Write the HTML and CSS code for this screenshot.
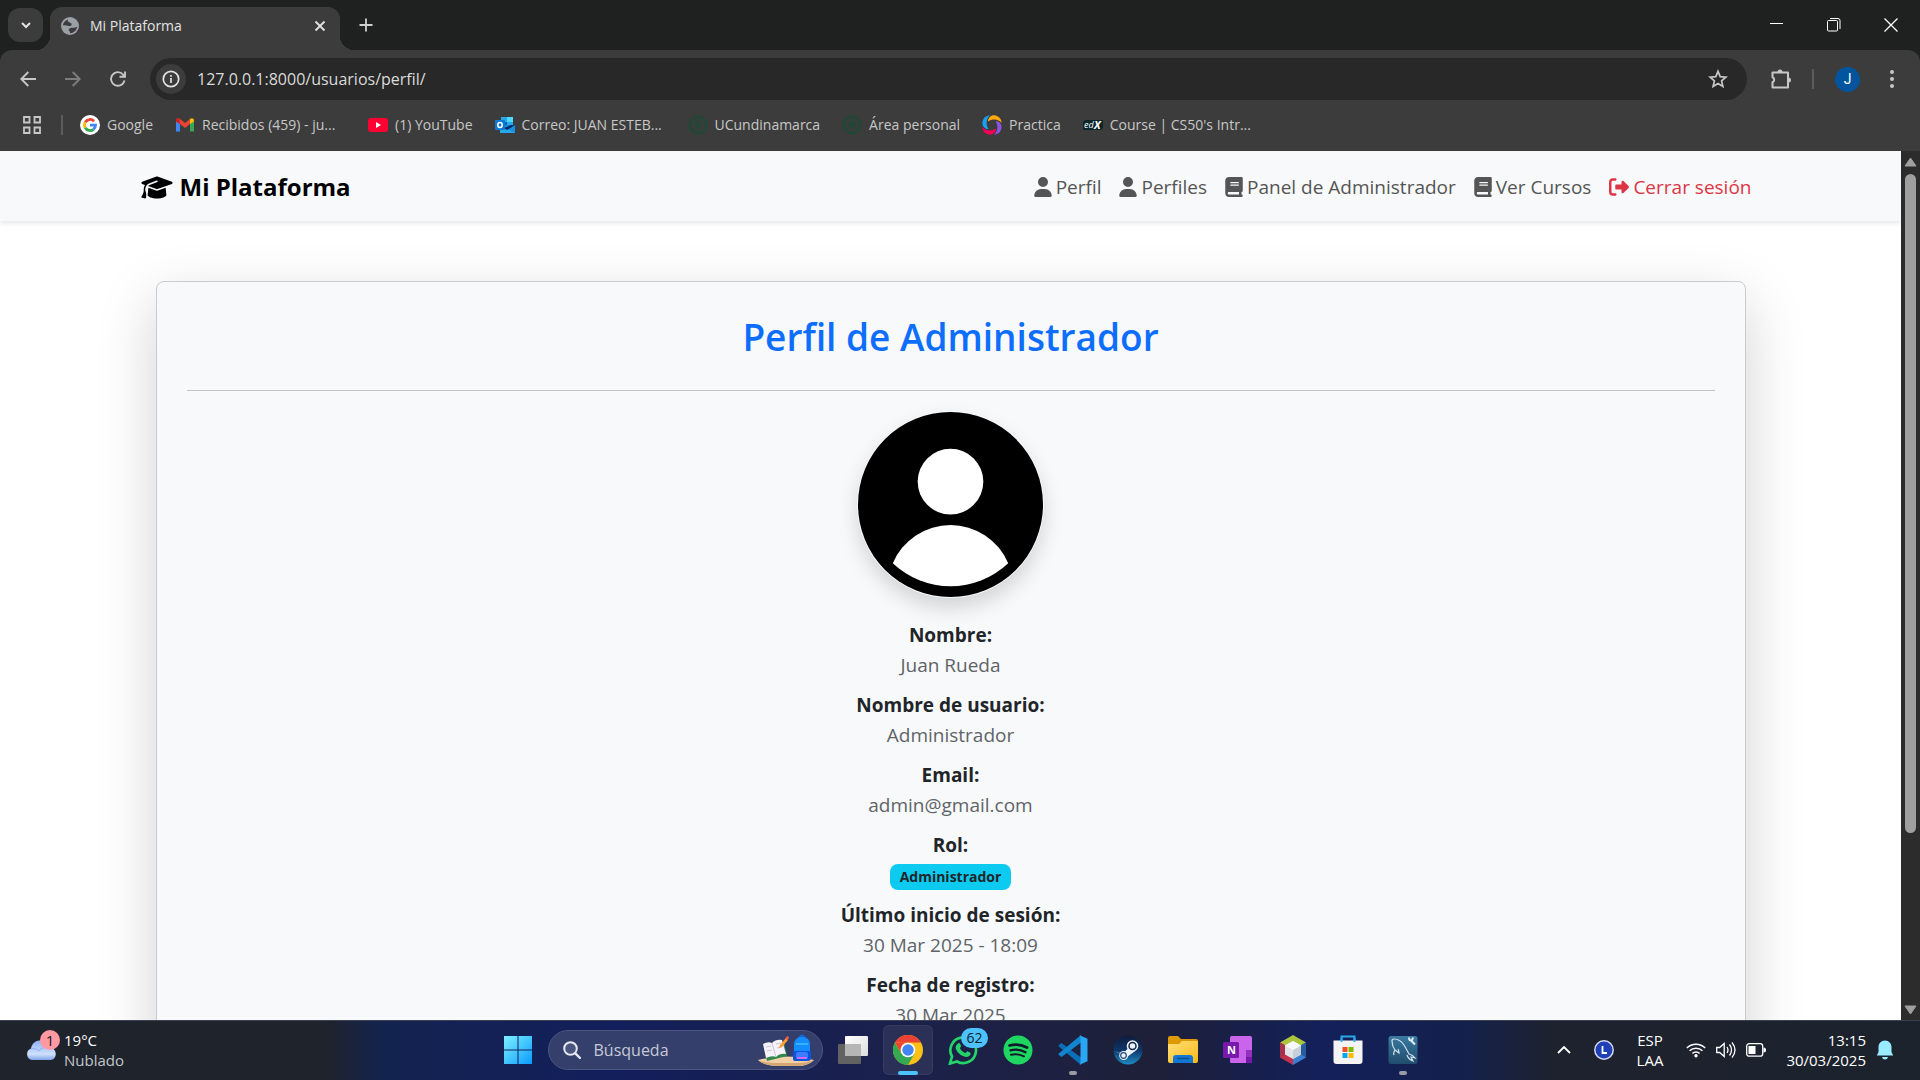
FILE: index.html
```html
<!DOCTYPE html>
<html lang="es">
<head>
<meta charset="utf-8">
<meta name="viewport" content="width=device-width, initial-scale=1">
<title>Mi Plataforma</title>
<link rel="stylesheet" href="styles.css">
</head>
<body>
<svg class="defs" width="0" height="0" aria-hidden="true">
  <symbol id="fa-user" viewBox="0 0 448 512"><path d="M224 256A128 128 0 1 0 224 0a128 128 0 1 0 0 256zm-45.7 48C79.8 304 0 383.8 0 482.3C0 498.7 13.3 512 29.7 512H418.3c16.4 0 29.7-13.3 29.7-29.7C448 383.8 368.2 304 269.7 304H178.3z"/></symbol>
  <symbol id="fa-book" viewBox="0 0 448 512"><path d="M96 0C43 0 0 43 0 96V416c0 53 43 96 96 96H384h32c17.7 0 32-14.3 32-32s-14.3-32-32-32V384c17.7 0 32-14.3 32-32V32c0-17.7-14.3-32-32-32H384 96zm0 384H352v64H96c-17.7 0-32-14.3-32-32s14.3-32 32-32zm32-240c0-8.8 7.2-16 16-16H336c8.8 0 16 7.2 16 16s-7.2 16-16 16H144c-8.8 0-16-7.2-16-16zm16 48H336c8.8 0 16 7.2 16 16s-7.2 16-16 16H144c-8.8 0-16-7.2-16-16s7.2-16 16-16z"/></symbol>
  <symbol id="seal" viewBox="0 0 20 20"><circle cx="10" cy="10" r="8.6" fill="none" stroke="#1c4a38" stroke-width="2.2" stroke-dasharray="1.9 .8"/><circle cx="10" cy="10" r="7" fill="none" stroke="#1c4a38" stroke-width="1"/><path d="M8 6.5v7M6.5 9c2-3.500 7-2.500 6.500 1.500-.3 2-2.500 3.500-4.500 2.500M8 8l3 2-2 2" fill="none" stroke="#1c4a38" stroke-width="1.200"/></symbol>
  <symbol id="blade" viewBox="0 0 20 20"><path d="M6 6.500C6 2 10.500-1 15 1c3 1.300 4.500 4 4.700 7C17 4.500 11 3.200 6 6.500z"/></symbol>
</svg>

<header class="browser">
  <div class="tabstrip">
    <button class="tab-search" aria-label="Buscar pestañas"><svg width="12" height="12" viewBox="0 0 12 12"><path d="M2 4l4 4 4-4" fill="none" stroke="#e3e3e3" stroke-width="2"/></svg></button>
    <div class="tab">
      <svg width="18" height="18" viewBox="0 0 18 18"><circle cx="9" cy="9" r="9" fill="#9aa0a6"/><path d="M1.800 8.500c.5-2.500 2-4.700 4.700-6 .5 1.500.5 2.500 2 3 2 .5 2.500 1 2 2.500-.5 1.200-1.500 1-3 1-2 0-3.500-1-5.700-.5zM9 16.200c0-1.700-.3-2.500-1.500-3 .5-2 2-2.700 4-2.500 1.500.2 2.500-.5 4.700-.7-.6 3.300-3.500 6.200-7.200 6.200z" fill="#3c3c3c"/></svg>
      <span class="tab-title">Mi Plataforma</span>
      <button class="bare" aria-label="Cerrar pestaña"><svg width="12" height="12" viewBox="0 0 12 12"><path d="M1.500 1.500l9 9M10.500 1.500l-9 9" stroke="#e3e3e3" stroke-width="1.800"/></svg></button>
    </div>
    <button class="bare new-tab" aria-label="Nueva pestaña"><svg width="14" height="14" viewBox="0 0 14 14"><path d="M7 .5v13M.5 7h13" stroke="#d0d0d0" stroke-width="1.800"/></svg></button>
    <div class="window-controls">
      <button class="bare" aria-label="Minimizar"><svg width="14" height="14" viewBox="0 0 14 14"><path d="M0 5.500h13" stroke="#fff"/></svg></button>
      <button class="bare" aria-label="Restaurar"><svg width="14" height="14" viewBox="0 0 14 14" fill="none" stroke="#fff"><rect x=".5" y="2.500" width="10" height="10.500" rx="1"/><path d="M3 .5h8a2 2 0 0 1 2 2v8.500"/></svg></button>
      <button class="bare" aria-label="Cerrar"><svg width="14" height="14" viewBox="0 0 14 14"><path d="M.5.5l13 13M13.500.5l-13 13" stroke="#fff" stroke-width="1.300"/></svg></button>
    </div>
  </div>

  <div class="toolbar">
    <button class="bare nav-btn" aria-label="Atrás"><svg width="16" height="16" viewBox="0 0 16 16" fill="none" stroke="#c7c7c7" stroke-width="1.900"><path d="M16 8H1.500M8.300 1L1.300 8l7 7"/></svg></button>
    <button class="bare nav-btn" aria-label="Adelante"><svg width="16" height="16" viewBox="0 0 16 16" fill="none" stroke="#7d7d7d" stroke-width="1.900"><path d="M0 8h14.500M7.700 1l7 7-7 7"/></svg></button>
    <button class="bare nav-btn" aria-label="Recargar"><svg width="16" height="16" viewBox="0 0 16 16" fill="none" stroke="#c7c7c7" stroke-width="1.900"><path d="M14.500 9.500A6.800 6.800 0 1 1 13 3.500l1.500 1.800M15 .5v5.300H9.500"/></svg></button>
    <div class="omnibox">
      <button class="site-info" aria-label="Información del sitio"><svg width="18" height="18" viewBox="0 0 18 18"><circle cx="9" cy="9" r="7.700" fill="none" stroke="#e3e3e3" stroke-width="1.700"/><path d="M9 8v5M9 5v1.700" stroke="#e3e3e3" stroke-width="1.700"/></svg></button>
      <input class="url" type="text" aria-label="Dirección" value="127.0.0.1:8000/usuarios/perfil/">
      <button class="bare" aria-label="Añadir a marcadores"><svg width="20" height="20" viewBox="0 0 20 20"><path d="M10 2.300l2.200 5.300 5.700.5-4.300 3.800 1.300 5.600L10 14.500l-4.900 3 1.300-5.600-4.300-3.800 5.700-.5z" fill="none" stroke="#c7c7c7" stroke-width="1.700"/></svg></button>
    </div>
    <button class="bare ext" aria-label="Extensiones"><svg width="22" height="22" viewBox="0 0 22 22"><path d="M2.500 4.500H18v15H2.500v-5.200a2.700 2.700 0 0 0 0-5z" fill="none" stroke="#c7c7c7" stroke-width="2" stroke-linejoin="round"/><path d="M7.500 4a2.500 2.500 0 0 1 5 0zM18.500 9.500a2.500 2.500 0 0 1 0 5z" fill="#c7c7c7"/></svg></button>
    <span class="divider"></span>
    <button class="avatar" aria-label="Perfil de Chrome">J</button>
    <button class="bare menu" aria-label="Menú"><svg width="6" height="20" viewBox="0 0 6 20" fill="#c7c7c7"><circle cx="3" cy="3" r="2"/><circle cx="3" cy="10" r="2"/><circle cx="3" cy="17" r="2"/></svg></button>
  </div>

  <nav class="bookmarks" aria-label="Marcadores">
    <button class="bare apps" aria-label="Aplicaciones"><svg width="18" height="18" viewBox="0 0 18 18" fill="none" stroke="#c7c7c7" stroke-width="1.800"><path d="M1 1h5.500v5.500H1zM11.500 1H17v5.500h-5.500zM1 11.500h5.500V17H1zM11.500 11.500H17V17h-5.500z"/></svg></button>
    <span class="divider"></span>
    <a href="#"><svg width="20" height="20" viewBox="0 0 20 20" fill="none" stroke-width="2.800"><circle cx="10" cy="10" r="10" fill="#fff"/><path d="M14 6.200A5.500 5.500 0 0 0 5.200 7.300" stroke="#ea4335"/><path d="M5.200 7.300a5.500 5.500 0 0 0 0 5.400" stroke="#fbbc05"/><path d="M5.200 12.700a5.500 5.500 0 0 0 8.300 1.600" stroke="#34a853"/><path d="M13.500 14.300A5.500 5.500 0 0 0 15.500 10.200H10" stroke="#4285f4"/></svg><span>Google</span></a>
    <a class="wide" href="#"><svg width="20" height="20" viewBox="0 0 20 20"><path d="M1 5v11.500h4V8.500z" fill="#4285f4"/><path d="M15 8.500v8h4V5z" fill="#34a853"/><path d="M1 5.500c0-2.500 2.500-3 4-1.500l5 4 5-4v5l-5 4-5-4L1 6.500z" fill="#ea4335"/><path d="M1 5.500c0-2 2-2.700 3.500-1.800L5 9 1 6.500z" fill="#c5221f"/><path d="M15 4c1.500-1.500 4-1 4 1.500v1L15 9z" fill="#fbbc04"/></svg><span>Recibidos (459) - ju...</span></a>
    <a href="#"><svg width="20" height="20" viewBox="0 0 20 20"><rect y="3" width="20" height="14" rx="3" fill="#ff0033"/><path d="M8 7v6l5-3z" fill="#fff"/></svg><span>(1) YouTube</span></a>
    <a class="wide" href="#"><svg width="20" height="20" viewBox="0 0 20 20"><path d="M6 2h12v9H6z" fill="#28a8ea"/><path d="M12 2h6v5h-6z" fill="#50d9ff"/><path d="M6 7h6v5H6z" fill="#0364b8"/><path d="M5 10h15v8H5z" fill="#1490df"/><path d="M5 18h15l-15-8z" fill="#28a8ea"/><path d="M20 10l-8 5-3-2 7-3z" fill="#0a2767"/><rect y="5" width="10" height="10" rx="1" fill="#0f78d4"/><ellipse cx="5" cy="10" rx="2.200" ry="2.500" fill="none" stroke="#fff" stroke-width="1.500"/></svg><span>Correo: JUAN ESTEB...</span></a>
    <a href="#"><svg width="20" height="20"><use href="#seal"/></svg><span>UCundinamarca</span></a>
    <a href="#"><svg width="20" height="20"><use href="#seal"/></svg><span>Área personal</span></a>
    <a href="#"><svg width="20" height="20" viewBox="0 0 20 20"><use href="#blade" width="20" height="20" fill="#ffa80f"/><use href="#blade" width="20" height="20" fill="#8a55e0" transform="rotate(90 10 10)"/><use href="#blade" width="20" height="20" fill="#f50057" transform="rotate(180 10 10)"/><use href="#blade" width="20" height="20" fill="#19a0f0" transform="rotate(270 10 10)"/></svg><span>Practica</span></a>
    <a href="#"><svg width="20" height="20" viewBox="0 0 20 20"><path d="M2 5h18v8l-2 2H0V7z" fill="#0b262b"/><text x="1" y="13" class="edx">ed</text><text x="11" y="14" class="edx edx-x">X</text></svg><span>Course | CS50's Intr...</span></a>
  </nav>
</header>

<div class="viewport">
  <div class="page">
    <nav class="navbar">
      <div class="container navbar-inner">
        <a class="brand" href="#"><svg width="32" height="25" viewBox="0 0 640 512"><path d="M320 32c-8.100 0-16.100 1.400-23.700 4.100L15.800 137.400C6.300 140.900 0 149.900 0 160s6.300 19.100 15.800 22.600l57.900 20.900C57.300 229.300 48 259.800 48 291.900v28.100c0 28.400-10.800 57.700-22.300 80.800c-6.500 13-13.900 25.800-22.500 37.600C0 442.700-.9 448.300 .9 453.400s6 8.900 11.200 10.200l64 16c4.200 1.100 8.700 .3 12.400-2s6.300-6.100 7.100-10.400c8.600-42.800 4.300-81.200-2.100-108.700C90.300 344.300 86 329.800 80 316.500V291.900c0-30.200 10.200-58.700 27.900-81.500c12.900-15.500 29.600-28 49.200-35.700l157-61.700c8.200-3.200 17.500 .8 20.700 9s-.8 17.500-9 20.700l-157 61.700c-12.400 4.900-23.300 12.400-32.200 21.600l159.600 57.600c7.600 2.700 15.600 4.100 23.700 4.100s16.100-1.400 23.700-4.100L624.200 182.600c9.500-3.400 15.800-12.500 15.800-22.600s-6.300-19.100-15.800-22.600L343.700 36.100C336.100 33.400 328.100 32 320 32zM128 408c0 35.300 86 72 192 72s192-36.700 192-72L496.700 262.600 354.500 314c-11.100 4-22.800 6-34.500 6s-23.500-2-34.500-6L143.300 262.600 128 408z"/></svg><span>Mi Plataforma</span></a>
        <ul class="nav-links">
          <li><a href="#"><svg width="18" height="20"><use href="#fa-user"/></svg>Perfil</a></li>
          <li><a href="#"><svg width="18" height="20"><use href="#fa-user"/></svg>Perfiles</a></li>
          <li><a href="#"><svg width="18" height="20"><use href="#fa-book"/></svg>Panel de Administrador</a></li>
          <li><a href="#"><svg width="18" height="20"><use href="#fa-book"/></svg>Ver Cursos</a></li>
          <li><a class="danger" href="#"><svg width="20" height="20" viewBox="0 0 512 512"><path d="M377.900 105.900L500.700 228.700c7.200 7.200 11.300 17.100 11.300 27.300s-4.100 20.100-11.300 27.300L377.900 406.100c-6.400 6.400-15 9.900-24 9.900c-18.700 0-33.900-15.200-33.900-33.900l0-62.100-128 0c-17.700 0-32-14.300-32-32l0-64c0-17.700 14.300-32 32-32l128 0 0-62.100c0-18.700 15.200-33.900 33.900-33.900c9 0 17.600 3.600 24 9.900zM160 96L96 96c-17.700 0-32 14.300-32 32l0 256c0 17.700 14.300 32 32 32l64 0c17.700 0 32 14.300 32 32s-14.300 32-32 32l-64 0c-53 0-96-43-96-96L0 128C0 75 43 32 96 32l64 0c17.700 0 32 14.300 32 32s-14.300 32-32 32z"/></svg>Cerrar sesión</a></li>
        </ul>
      </div>
    </nav>
    <main class="container content">
      <section class="card">
        <h2>Perfil de Administrador</h2>
        <hr>
        <svg class="photo" width="187" height="187" viewBox="0 0 188 188" role="img" aria-label="Foto de perfil"><circle cx="94" cy="94" r="93" /><circle cx="94" cy="71" r="33" fill="#fff"/><path d="M36 153a63 63 0 0 1 116 0a84 84 0 0 1-116 0z" fill="#fff"/></svg>
        <dl class="details">
          <div><dt>Nombre:</dt><dd>Juan Rueda</dd></div>
          <div><dt>Nombre de usuario:</dt><dd>Administrador</dd></div>
          <div><dt>Email:</dt><dd>admin@gmail.com</dd></div>
          <div><dt>Rol:</dt><dd><span class="badge">Administrador</span></dd></div>
          <div><dt>Último inicio de sesión:</dt><dd>30 Mar 2025 - 18:09</dd></div>
          <div><dt>Fecha de registro:</dt><dd>30 Mar 2025</dd></div>
        </dl>
      </section>
    </main>
  </div>
  <div class="scrollbar" aria-hidden="true">
    <svg width="13" height="10" viewBox="0 0 13 10"><path d="M6.500 1L12 9H1z" fill="#9f9f9f" stroke="#9f9f9f" stroke-linejoin="round"/></svg>
    <div class="track"><div class="thumb"></div></div>
    <svg width="13" height="10" viewBox="0 0 13 10"><path d="M6.500 9L12 1H1z" fill="#9f9f9f" stroke="#9f9f9f" stroke-linejoin="round"/></svg>
  </div>
</div>

<footer class="taskbar">
  <button class="weather">
    <span class="weather-icon">
      <svg width="30" height="20" viewBox="0 0 30 20"><defs><linearGradient id="cl" x2="0" y2="1"><stop stop-color="#8fb2f5"/><stop offset=".7" stop-color="#cfe0fb"/><stop offset="1" stop-color="#7fa3ea"/></linearGradient></defs><path d="M6 20a6 6 0 0 1-1-11.500C6 3 10 .5 14 .5c5 0 8 3.500 9.500 7C32 8 31.500 20 24 20z" fill="url(#cl)"/><path d="M5 9c4-1 6 0 8 2 2-3 6-4 10-3" fill="none" stroke="#8eaeee"/></svg>
      <span class="count">1</span>
    </span>
    <span class="weather-text"><span>19°C</span><span class="dim">Nublado</span></span>
  </button>

  <div class="apps-row">
    <button class="app" aria-label="Inicio"><svg width="30" height="30" viewBox="0 0 30 30"><defs><linearGradient id="win" x2="1" y2="1"><stop stop-color="#7ef0ff"/><stop offset="1" stop-color="#0a9bff"/></linearGradient></defs><path d="M1 1h13.500v13.500H1zM15.500 1H29v13.500H15.500zM1 15.500h13.500V29H1zM15.500 15.500H29V29H15.500z" fill="url(#win)"/></svg></button>
    <label class="search">
      <svg width="18" height="18" viewBox="0 0 18 18"><circle cx="7.500" cy="7.500" r="6.300" fill="#4a5680" stroke="#e6e8f0" stroke-width="2"/><path d="M12.300 12.300L17 17" stroke="#e6e8f0" stroke-width="2.400" stroke-linecap="round"/></svg>
      <input type="search" placeholder="Búsqueda" aria-label="Búsqueda">
      <svg class="art" width="58" height="32" viewBox="0 0 58 32"><path d="M1 26Q28 19 57 26q-6 6-16 6H18Q6 31 1 26z" fill="#f2cfa4"/><path d="M1 26q5 5 17 6h23q12-1 16-6-7 3-16 3H18Q7 29 1 26z" fill="#d3a673"/><path d="M7 13l20-5 3 14-20 5z" fill="#2f8a4c"/><path d="M6 10q5-3 9-1 4-4 10-3l4 14q-6-1-10 3-4-2-10 1z" fill="#f7f2f8"/><path d="M15 9l4 14M9 13l5-1M10 17l5-1M19 10l5-1M20 14l5-1" stroke="#cfc3da" fill="none"/><path d="M22 14l1-3 6-7 2 2-6 7z" fill="#ffa02d"/><path d="M28 5l2-3 2 1-1 3z" fill="#f25a4c"/><path d="M42 4q3-5 6 0" fill="none" stroke="#1169da" stroke-width="2"/><rect x="37" y="3" width="16" height="24" rx="7" fill="#128cff"/><path d="M36 17h18v8q-1 2-3 2H39q-3 0-3-2z" fill="#0a55d9"/><path d="M39 10h12" stroke="#5fd0ff"/><rect x="39" y="18" width="12" height="7" rx="2" fill="#3d7bff"/><path d="M40 24h10" stroke="#cf68ff" stroke-width="2"/></svg>
    </label>
    <button class="app" aria-label="Vista de tareas"><svg width="30" height="28" viewBox="0 0 30 28"><defs><linearGradient id="tv" x2="1" y2="1"><stop stop-color="#fff"/><stop offset="1" stop-color="#dcdcdc"/></linearGradient></defs><rect y="8" width="23" height="20" rx="1" fill="#626262"/><rect x="7" width="23" height="20" rx="1" fill="url(#tv)"/><path d="M7 8h16v12H7z" fill="#b5b5b5"/></svg></button>
    <button class="app active" aria-label="Google Chrome"><svg width="30" height="30" viewBox="0 0 30 30"><circle cx="15" cy="15" r="15" fill="#fbc116"/><path d="M2 7.500A15 15 0 0 1 28 7.500H15z" fill="#ea4335"/><path d="M2 7.500A15 15 0 0 0 15 30l6.500-11.300L15 15 8.500 18.700z" fill="#34a853"/><path d="M2 7.500l6.500 11.200A7.500 7.500 0 0 1 15 7.500z" fill="#ea4335"/><circle cx="15" cy="15" r="7.300" fill="#fff"/><circle cx="15" cy="15" r="5.700" fill="#4285f4"/></svg></button>
    <button class="app" aria-label="WhatsApp"><svg width="30" height="30" viewBox="0 0 30 30"><path d="M2 28.500l2-7a12.800 12.800 0 1 1 5 5z" fill="none" stroke="#25d366" stroke-width="2.700"/><path d="M10 8.500c1.500-1 2-.5 3 2.200.3.900-1.300 2-1 2.500 1.300 2.500 2.800 3.800 5.300 4.800.7.300 1.700-2 2.500-1.600 2.800 1.300 3 1.500 2.800 2.600-.7 2.700-4 3.500-6.500 2.500-4.300-1.500-6.500-4-8-7-1-2.300-.2-4.700 1.900-6z" fill="#25d366"/></svg><span class="notif">62</span></button>
    <button class="app" aria-label="Spotify"><svg width="30" height="30" viewBox="0 0 30 30" fill="none" stroke="#121a2b" stroke-linecap="round"><circle cx="15" cy="15" r="14.500" fill="#1ed760" stroke="none"/><path d="M6.500 10.500q9-2.500 17.500 2" stroke-width="2.800"/><path d="M7.500 15.300q8-2 15 2" stroke-width="2.300"/><path d="M8 19.700q7-1.500 13 1.700" stroke-width="1.900"/></svg></button>
    <button class="app open" aria-label="Visual Studio Code"><svg width="30" height="30" viewBox="0 0 30 30"><path d="M1.500 9.500l2-1.500L23 22.500V30L.5 11.300q-.2-1 1-1.800z" fill="#0a6fb8"/><path d="M1.500 20.500l2 1.500L23 7.500V0L.5 18.700q-.2 1 1 1.800z" fill="#1285d0"/><path d="M21.500.2l8 3.500v22.600l-8 3.500q1-1 1-2.500V2.700q0-1.500-1-2.500z" fill="#2aa7f3"/></svg></button>
    <button class="app" aria-label="Steam"><svg width="30" height="30" viewBox="0 0 30 30"><defs><linearGradient id="st" x2="0" y2="1"><stop stop-color="#101b3c"/><stop offset=".5" stop-color="#0d3568"/><stop offset="1" stop-color="#1d8cc4"/></linearGradient></defs><circle cx="15" cy="15" r="14.500" fill="url(#st)"/><path d="M.7 16l9 3 6.500-7 6 4-7.500 5.500" fill="#eef2f6"/><circle cx="19.500" cy="11" r="5.800" fill="#eef2f6"/><circle cx="19.500" cy="11" r="3.500" fill="none" stroke="#10294f" stroke-width="1.500"/><circle cx="10.700" cy="20.500" r="4.500" fill="#eef2f6"/><circle cx="10.500" cy="20.500" r="2.800" fill="none" stroke="#1a4b7c" stroke-width="1.200"/></svg></button>
    <button class="app" aria-label="Explorador de archivos"><svg width="30" height="28" viewBox="0 0 30 28"><defs><linearGradient id="fo" x2="1" y2="1"><stop stop-color="#ffe07a"/><stop offset="1" stop-color="#f9b916"/></linearGradient></defs><path d="M0 2q0-2 2-2h8l3 3h15q2 0 2 2v8H0z" fill="#dd9a05"/><path d="M0 8h11l3-3h16v20q0 2-2 2H2q-2 0-2-2z" fill="url(#fo)"/><path d="M5 27v-5q0-3 3-3h14q3 0 3 3v5z" fill="#1277d4"/><path d="M9 22.500h12" stroke="#0b4f93" stroke-width="1.500"/></svg></button>
    <button class="app" aria-label="OneNote"><svg width="30" height="28" viewBox="0 0 30 28"><rect x="7" width="22" height="27" rx="1.500" fill="#ca64ea"/><path d="M23 14h6v7h-6z" fill="#9332bf"/><path d="M23 21h6v6h-6z" fill="#7719aa"/><rect y="6" width="16" height="16" rx="1.500" fill="#7719aa"/><text x="4" y="18" class="letter-n">N</text></svg></button>
    <button class="app" aria-label="NetBeans"><svg width="30" height="30" viewBox="0 0 30 30"><path d="M15 0l13 7.500-13 7.500L2 7.500z" fill="#acc53c"/><path d="M2 7.500L15 15v15L2 22.500z" fill="#c4314b"/><path d="M28 7.500L15 15v15l13-7.500z" fill="#3c7fd0"/><path d="M2 7.500l5 3v9l-5 3z" fill="#a5324c"/><path d="M23 10.500l5-3v15l-5-3z" fill="#275a9f"/><path d="M15 6l8 4.500v9L15 24l-8-4.500v-9z" fill="#dfe5e9"/><path d="M15 15l8-4.500v9L15 24z" fill="#c7d0d8"/><path d="M15 6l8 4.500-8 4.500-8-4.500z" fill="#f6f8f9"/></svg></button>
    <button class="app" aria-label="Microsoft Store"><svg width="30" height="30" viewBox="0 0 30 30"><path d="M8.500 7V1.500h13V7" fill="none" stroke="#29a9ea" stroke-width="2"/><path d="M.5 5.500h29V26q0 3-3 3h-23q-3 0-3-3z" fill="#f4f4f4"/><path d="M8.500 3v4M21.500 3v4" stroke="#29a9ea" stroke-width="2"/><path d="M9.500 12h5v5h-5z" fill="#f25022"/><path d="M15.500 12h5v5h-5z" fill="#7fba00"/><path d="M9.500 18h5v5h-5z" fill="#00a4ef"/><path d="M15.500 18h5v5h-5z" fill="#ffb900"/></svg></button>
    <button class="app open" aria-label="MySQL Workbench"><svg width="30" height="30" viewBox="0 0 30 30"><defs><linearGradient id="my" x2="0" y2="1"><stop stop-color="#3a7ba3"/><stop offset="1" stop-color="#1f4c6c"/></linearGradient></defs><rect x=".5" y="1" width="29" height="28" rx="2.500" fill="url(#my)"/><path d="M6 20q-1-2 1-5-3-4-3-9 0-2 2-2 6 0 10 6 3 5 5 9 4 1 6 4-3-1-4-1l2 4q-5-2-6-6M7 15l4 3q0-2-1-4" fill="none" stroke="#d3e0e8" stroke-width="1.200"/><path d="M21 2.500q0 3 2 3l4 4M25 2.500l-1 3" fill="none" stroke="#e5edf2" stroke-width="2"/></svg></button>
  </div>

  <div class="tray">
    <button class="bare" aria-label="Mostrar iconos ocultos"><svg width="14" height="8" viewBox="0 0 14 8"><path d="M1 7l6-6 6 6" fill="none" stroke="#fff" stroke-width="1.800"/></svg></button>
    <button class="bare" aria-label="Reloj"><svg width="20" height="20" viewBox="0 0 20 20"><circle cx="10" cy="10" r="9.200" fill="#1e3fb5" stroke="#d5daf0" stroke-width="1.500"/><path d="M8.500 6v7h4.500" fill="none" stroke="#fff" stroke-width="1.800"/></svg></button>
    <button class="bare lang"><span>ESP</span><span>LAA</span></button>
    <button class="bare status" aria-label="Red, volumen y batería">
      <svg width="20" height="16" viewBox="0 0 20 16" fill="none" stroke="#fff" stroke-width="1.500"><path d="M.8 6a13 13 0 0 1 18.400 0M3.600 8.800a9 9 0 0 1 12.800 0M6.400 11.500a5 5 0 0 1 7.200 0"/><circle cx="10" cy="13.800" r="1.700" fill="#fff" stroke="none"/></svg>
      <svg width="20" height="18" viewBox="0 0 20 18" fill="none" stroke="#fff" stroke-width="1.300"><path d="M.7 6.500v5h3l4.500 4v-13l-4.500 4zM11 6q2 3 0 6M13.500 3.500q4 5.500 0 11M16 1.500q6 7.500 0 15"/></svg>
      <svg width="20" height="14" viewBox="0 0 20 14"><rect x=".7" y=".7" width="16" height="12.500" rx="2.500" fill="none" stroke="#fff" stroke-width="1.300"/><rect x="2.500" y="3" width="7" height="8" fill="#fff"/><path d="M17.500 4.500q2.500 0 2.500 2.500t-2.500 2.500z" fill="#fff"/></svg>
    </button>
    <button class="bare clock"><span>13:15</span><span>30/03/2025</span></button>
    <button class="bare" aria-label="Notificaciones"><svg width="18" height="20" viewBox="0 0 18 20"><path d="M9 .5c-4 0-6.500 3-6.500 6.500V12L.8 15.500h16.400L15.500 12V7C15.500 3.500 13 .5 9 .5zM6 17q.5 2.500 3 2.500t3-2.500z" fill="#99ebff"/></svg></button>
  </div>
</footer>
</body>
</html>
```
FILE: styles.css
```css
* { box-sizing: border-box; }

body {
  margin: 0;
  height: 100vh;
  display: flex;
  flex-direction: column;
  overflow: hidden;
  font-family: "Open Sans", "Noto Sans", sans-serif;
  color: #212529;
}

svg { display: block; flex: none; }
.defs { position: absolute; }
a { color: inherit; text-decoration: none; }
button, input { font: inherit; color: inherit; }

button, .bare {
  border: 0;
  padding: 0;
  background: none;
  flex: none;
}

/* Browser window */
.browser {
  flex: none;
  background: #1f2120;
  color: #c7c7c7;
  font-size: 14px;
}

.tabstrip {
  height: 50px;
  display: flex;
  align-items: center;
  padding-left: 8px;
}

.tab-search {
  width: 35px;
  height: 34px;
  border-radius: 12px;
  background: #3c3c3c;
  display: grid;
  place-items: center;
}

.tab {
  position: relative;
  align-self: flex-end;
  width: 290px;
  height: 43px;
  margin-left: 7px;
  padding: 0 14px 6px 11px;
  display: flex;
  align-items: center;
  gap: 11px;
  border-radius: 12px 12px 0 0;
  background: #3c3c3c;
  color: #e3e3e3;
}

.tab::before,
.tab::after {
  content: "";
  position: absolute;
  bottom: 0;
  width: 14px;
  height: 14px;
}

.tab::before {
  right: 100%;
  background: radial-gradient(circle at 0 0, transparent 14px, #3c3c3c 14px);
}

.tab::after {
  left: 100%;
  background: radial-gradient(circle at 100% 0, transparent 14px, #3c3c3c 14px);
}

.tab-title { flex: 1; }
.new-tab { margin-left: 19px; }

.window-controls {
  margin-left: auto;
  padding-right: 22px;
  display: flex;
  gap: 43px;
}

.toolbar {
  height: 58px;
  display: flex;
  align-items: center;
  padding: 0 25px 0 20px;
  border-radius: 12px 12px 0 0;
  background: #3c3c3c;
}

.nav-btn { margin-right: 29px; }

.omnibox {
  flex: 1;
  min-width: 0;
  height: 42px;
  margin-left: -5px;
  padding: 0 19px 0 6px;
  display: flex;
  align-items: center;
  border-radius: 21px;
  background: #282828;
}

.site-info {
  width: 30px;
  height: 30px;
  border-radius: 50%;
  background: #3c3c3c;
  display: grid;
  place-items: center;
}

.url {
  flex: 1;
  min-width: 0;
  margin-left: 11px;
  padding: 0;
  border: 0;
  outline: 0;
  background: none;
  color: #dadada;
  font-size: 16px;
}

.ext { margin: 0 20px 0 23px; }

.divider {
  flex: none;
  width: 2px;
  height: 20px;
  background: #5c5c5c;
}

.avatar {
  width: 25px;
  height: 25px;
  margin: 0 29px 0 21px;
  border-radius: 50%;
  background: #00559e;
  color: #fff;
  font-family: Roboto, sans-serif;
}

.bookmarks {
  height: 43px;
  padding: 0 23px 10px;
  display: flex;
  align-items: center;
  background: #3c3c3c;
}

.bookmarks a {
  display: flex;
  align-items: center;
  gap: 7px;
  margin-right: 22px;
  white-space: nowrap;
}

.bookmarks .wide { width: 171px; }
.bookmarks .divider { margin: 0 17px 0 20px; }

.edx {
  fill: #fff;
  font: italic 9px "Open Sans", sans-serif;
}

.edx-x { font-weight: 700; font-size: 11px; }

/* Web page */
.viewport {
  flex: 1;
  min-height: 0;
  display: flex;
}

.page {
  flex: 1;
  min-width: 0;
  overflow: hidden;
  background: #fff;
  font-size: 19px;
  line-height: 30px;
}

.container {
  max-width: 1650px;
  margin: 0 auto;
  padding: 0 15px;
}

.navbar {
  position: relative;
  background: #f8f9fa;
  box-shadow: 0 2px 5px rgba(0, 0, 0, .1);
}

.navbar-inner {
  min-height: 70px;
  padding-top: 2px;
  display: flex;
  align-items: center;
  justify-content: space-between;
}

.brand {
  display: flex;
  align-items: center;
  gap: 7px;
  color: #000;
  font-size: 24px;
  font-weight: 700;
}

.nav-links {
  margin: 0;
  padding: 0;
  display: flex;
  list-style: none;
  color: #555;
}

.nav-links a {
  display: flex;
  align-items: center;
  gap: 4px;
  padding: 0 9px;
}

.nav-links svg { fill: currentColor; }
.nav-links .danger { color: #dc3545; }

.content { padding: 60px 30px; }

.card {
  padding: 30px;
  border: 1px solid #c9cbcd;
  border-radius: 8px;
  background: #f8f9fa;
  box-shadow: 0 20px 60px rgba(0, 0, 0, .18);
  text-align: center;
}

h2 {
  margin: 0;
  color: #0d6efd;
  font-size: 37px;
  font-weight: 600;
  line-height: 50px;
}

hr {
  margin: 28px 0 20px;
  border: 0;
  border-top: 1px solid #c2c4c6;
}

.photo {
  margin: 0 auto 22px;
  border-radius: 50%;
  box-shadow: 0 10px 20px rgba(0, 0, 0, .15);
}

.details { margin: 0; }
.details div { margin-bottom: 10px; }
dt { font-weight: 700; }
dd { margin: 0; height: 30px; color: #5f6468; }

.badge {
  display: inline-block;
  padding: 0 10px;
  border-radius: 8px;
  background: #0dcaf0;
  color: #212529;
  font-size: 14px;
  font-weight: 700;
  line-height: 26px;
}

.scrollbar {
  flex: none;
  width: 19px;
  padding: 6px 0 5px;
  display: flex;
  flex-direction: column;
  align-items: center;
  gap: 7px;
  background: #2c2c2c;
}

.track { flex: 1; }

.thumb {
  width: 11px;
  height: 80%;
  border-radius: 6px;
  background: #9f9f9f;
}

/* Taskbar */
.taskbar {
  flex: none;
  height: 60px;
  padding: 0 26px 2px;
  display: grid;
  grid-template-columns: 1fr auto 1fr;
  align-items: center;
  border-top: 1px solid #3b4150;
  background: linear-gradient(90deg, #1e232c 0 17%, #13234f 20%, #131f5c 32%, #1c2148 50%, #1e2038 60%, #13205a 69%, #13204c 76%, #1e222e 81%, #1c232d);
  color: #fff;
  font-size: 15px;
  line-height: 20px;
}

.weather {
  display: flex;
  align-items: center;
  gap: 8px;
  text-align: left;
}

.weather-icon { position: relative; }

.count {
  position: absolute;
  top: -10px;
  right: -4px;
  width: 20px;
  height: 20px;
  border-radius: 50%;
  background: #ff99a4;
  color: #1a1a1a;
  text-align: center;
}

.weather-text,
.lang,
.clock {
  display: flex;
  flex-direction: column;
}

.dim { color: #c3c6cb; }

.apps-row {
  display: flex;
  align-items: center;
  gap: 5px;
}

.app {
  position: relative;
  width: 50px;
  height: 50px;
  display: grid;
  place-items: center;
}

.active {
  border-radius: 6px;
  background: rgba(255, 255, 255, .07);
  box-shadow: inset 0 0 0 1px rgba(255, 255, 255, .06);
}

.active::after,
.open::after {
  content: "";
  position: absolute;
  bottom: 0;
  left: 21px;
  width: 8px;
  height: 4px;
  border-radius: 2px;
  background: #9a9ba5;
}

.active::after {
  left: 15px;
  width: 20px;
  background: #4cc2ff;
}

.notif {
  position: absolute;
  top: 3px;
  right: 0;
  padding: 0 5px;
  border-radius: 10px;
  background: #4cc2ff;
  color: #10202c;
  font-size: 14px;
}

.search {
  width: 275px;
  height: 40px;
  padding: 0 7px 0 14px;
  display: flex;
  align-items: center;
  border: 1px solid #4b5580;
  border-radius: 20px;
  background: #343f6b;
}

.search input {
  flex: 1;
  min-width: 0;
  margin-left: 13px;
  padding: 0;
  border: 0;
  outline: 0;
  background: none;
  font-size: 16px;
}

.search input::placeholder { color: #c6cad8; opacity: 1; }

.letter-n {
  fill: #fff;
  font: 700 11px "Open Sans", sans-serif;
}

.tray {
  display: flex;
  align-items: center;
  justify-content: flex-end;
}

.tray button + button { margin-left: 23px; }

.lang { text-align: center; }

.status {
  display: flex;
  align-items: center;
  gap: 10px;
}

.clock { text-align: right; }

.tray .clock { margin-left: 20px; }
.tray .clock + button { margin-left: 10px; }
```
